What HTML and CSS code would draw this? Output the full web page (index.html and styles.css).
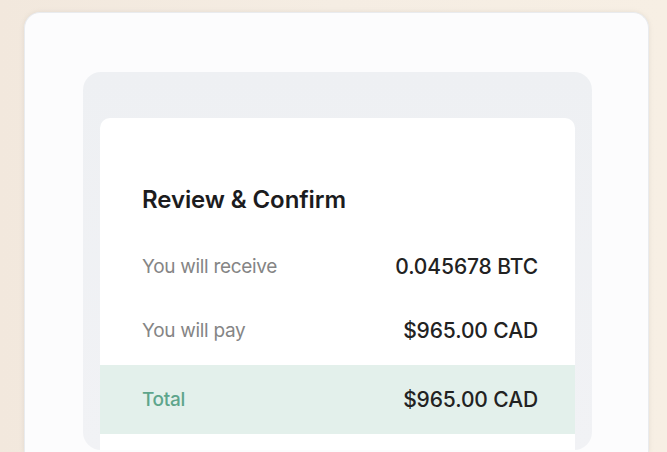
FILE: index.html
```html
<!DOCTYPE html>
<html lang="en">
<head>
    <meta charset="UTF-8">
    <meta name="viewport" content="width=device-width, initial-scale=1.0">
    <title>Review &amp; Confirm</title>
    <link rel="stylesheet" href="styles.css">
</head>
<body>

    <!-- Outer sheet -->
    <div class="sheet">
        <!-- Grey phone panel -->
        <div class="panel">
            <!-- Summary card -->
            <div class="card">
                <h2 class="card-title">Review &amp; Confirm</h2>

                <div class="row">
                    <span class="label">You will receive</span>
                    <span class="value">0.045678 BTC</span>
                </div>

                <div class="row">
                    <span class="label">You will pay</span>
                    <span class="value">$965.00 CAD</span>
                </div>

                <div class="row total">
                    <span class="label">Total</span>
                    <span class="value">$965.00 CAD</span>
                </div>
            </div>
        </div>
    </div>

</body>
</html>
```

FILE: styles.css
```css
html, body {
    height: 100%;
}

body {
    margin: 0;
    padding: 0;
    overflow: hidden;
    font-family: Inter, "Open Sans", Arial, sans-serif;
    background: linear-gradient(90deg, #f2e8dd 0%, #f5ede3 50%, #f7efe4 100%);
}

/* Outer white sheet */
.sheet {
    margin: 12px 0 0 24px;
    width: 625px;
    height: 440px;
    padding-top: 59px;
    box-sizing: border-box;
    background-color: #fcfcfd;
    border: 1px solid #e9ebee;
    border-bottom: none;
    border-radius: 16px 16px 0 0;
    box-shadow: 0 0 4px rgba(180, 170, 160, 0.25);
}

/* Grey panel */
.panel {
    margin-left: 58px;
    width: 509px;
    height: 378px;
    padding: 46px 17px 0 17px;
    box-sizing: border-box;
    background: linear-gradient(180deg, #eef0f3 0%, #f1f2f5 100%);
    border-radius: 18px;
}

/* White summary card */
.card {
    height: 332px;
    background-color: #ffffff;
    border-radius: 10px 10px 0 0;
    padding-top: 67px;
    box-sizing: border-box;
}

.card-title {
    margin: 0 0 19px 0;
    padding: 0 37px 0 42px;
    height: 30px;
    line-height: 30px;
    font-size: 24px;
    font-weight: 600;
    color: #1c1c1e;
    letter-spacing: -0.1px;
}

.row {
    display: flex;
    align-items: center;
    justify-content: space-between;
    height: 64px;
    padding: 0 37px 0 42px;
}

.label {
    font-size: 19px;
    color: #858585;
    letter-spacing: -0.3px;
}

.value {
    font-size: 21px;
    font-weight: 500;
    color: #222222;
    letter-spacing: -0.1px;
}

/* Total band */
.total {
    margin-top: 3px;
    height: 69px;
    background-color: #e3f0eb;
}

.total .label {
    color: #5ea58b;
    font-weight: 500;
}
```
